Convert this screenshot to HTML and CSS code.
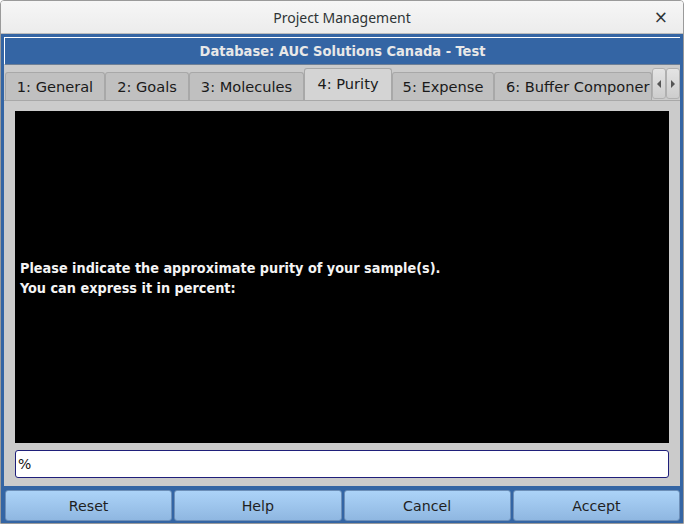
FILE: index.html
```html
<!DOCTYPE html>
<html>
<head>
<meta charset="utf-8">
<link rel="stylesheet" href="styles.css">
</head>
<body>
<div class="window">
  <div class="titlebar">
    <span class="title">Project Management</span>
    <span class="close">×</span>
  </div>
  <div class="client">
    <div class="banner">Database: AUC Solutions Canada - Test</div>
    <div class="tabwidget">
      <div class="tabbar">
        <div class="tab t1">1: General</div>
        <div class="tab t2">2: Goals</div>
        <div class="tab t3">3: Molecules</div>
        <div class="tab t4 active">4: Purity</div>
        <div class="tab t5">5: Expense</div>
        <div class="tab t6">6: Buffer Componer</div>
        <div class="scroll">
          <svg width="6" height="8" viewBox="0 0 6 8"><path d="M5 0 L1 4 L5 8 Z" fill="#555"/></svg>
        </div>
        <div class="scroll">
          <svg width="6" height="8" viewBox="0 0 6 8"><path d="M1 0 L5 4 L1 8 Z" fill="#555"/></svg>
        </div>
      </div>
      <div class="panel">
        <div class="textbox">
          <p>Please indicate the approximate purity of your sample(s).<br>You can express it in percent:</p>
        </div>
        <div class="lineedit">%</div>
      </div>
    </div>
    <div class="buttons">
      <div class="btn">Reset</div>
      <div class="btn">Help</div>
      <div class="btn">Cancel</div>
      <div class="btn">Accept</div>
    </div>
  </div>
</div>
</body>
</html>
```
FILE: styles.css
```css
html, body {
  margin: 0;
  padding: 0;
  background: #ffffff;
}
.window {
  width: 684px;
  height: 524px;
  box-sizing: border-box;
  border: 1px solid #9a9a9a;
  border-radius: 4px 4px 0 0;
  display: flex;
  flex-direction: column;
  overflow: hidden;
  font-family: "DejaVu Sans", sans-serif;
}
.titlebar {
  height: 32px;
  flex: none;
  background: linear-gradient(#f6f6f6, #ececec);
  border-bottom: 1px solid #bcbcbc;
  display: flex;
  align-items: center;
  justify-content: center;
  position: relative;
}
.title {
  font-family: "Noto Sans", sans-serif;
  font-size: 14px;
  color: #2e3436;
}
.close {
  position: absolute;
  right: 15px;
  top: 6px;
  font-size: 17px;
  color: #2e3436;
}
.client {
  flex: 1;
  background: #3465a4;
  padding: 3px 3px 2px 3px;
  display: flex;
  flex-direction: column;
}
.banner {
  height: 26px;
  flex: none;
  border-top: 1px solid #ffffff;
  border-left: 1px solid #ffffff;
  border-bottom: 1px solid #6d7f96;
  display: flex;
  align-items: center;
  justify-content: center;
  color: #e8e8e8;
  font-family: "DejaVu Sans Condensed", "DejaVu Sans", sans-serif;
  font-stretch: condensed;
  font-weight: bold;
  font-size: 14.5px;
}
.tabwidget {
  flex: 1;
  display: flex;
  flex-direction: column;
  background: #cfcfcf;
}
.tabbar {
  height: 35px;
  flex: none;
  display: flex;
  align-items: flex-end;
  padding-left: 1px;
  background: #cbcbcb;
  overflow: hidden;
}
.tab {
  flex: none;
  height: 28px;
  box-sizing: border-box;
  background: #c0c0c0;
  border: 1px solid #a8a8a8;
  border-bottom: none;
  border-radius: 3px 3px 0 0;
  display: flex;
  align-items: center;
  justify-content: center;
  font-size: 14.6px;
  color: #1a1a1a;
  white-space: nowrap;
  overflow: hidden;
}
.tab.active {
  height: 32px;
  background: #d4d4d4;
  padding-bottom: 3px;
}
.t1 { width: 100px; }
.t2 { width: 84px; }
.t3 { width: 115px; }
.t4 { width: 88px; }
.t5 { width: 102px; }
.t6 { width: 158px; justify-content: flex-start; padding-left: 11px; }
.scroll {
  flex: none;
  width: 14px;
  height: 31px;
  box-sizing: border-box;
  background: linear-gradient(#e4e4e4, #cdcdcd);
  border: 1px solid #b0b0b0;
  border-radius: 3px;
  display: flex;
  align-items: center;
  justify-content: center;
  margin-bottom: 1px;
}
.panel {
  flex: 1;
  display: flex;
  flex-direction: column;
  padding: 10px 11px 8px 11px;
  background: #cbcbcb;
  border-top: 1px solid #a8a8a8;
}
.textbox {
  flex: 1;
  background: #000000;
  display: flex;
  align-items: center;
  padding-left: 5px;
}
.textbox p {
  margin: 0;
  color: #f4f4f4;
  font-family: "DejaVu Sans Condensed", "DejaVu Sans", sans-serif;
  font-stretch: condensed;
  font-weight: bold;
  font-size: 14.3px;
  line-height: 20px;
  padding-top: 2px;
}
.lineedit {
  height: 28px;
  flex: none;
  box-sizing: border-box;
  margin-top: 7px;
  background: #ffffff;
  border: 1px solid #1f1f7a;
  border-radius: 3px;
  display: flex;
  align-items: center;
  padding-left: 2px;
  font-size: 14px;
  color: #111111;
}
.buttons {
  flex: none;
  height: 31px;
  margin-top: 4px;
  display: grid;
  grid-template-columns: 1fr 1fr 1fr 1fr;
  gap: 2px;
  padding-left: 1px;
}
.btn {
  box-sizing: border-box;
  border: 1px solid #6d8fb8;
  border-radius: 3px;
  background: linear-gradient(#acd3f8, #8fb7e1);
  display: flex;
  align-items: center;
  justify-content: center;
  font-size: 14.2px;
  color: #1f1f1f;
}
```
